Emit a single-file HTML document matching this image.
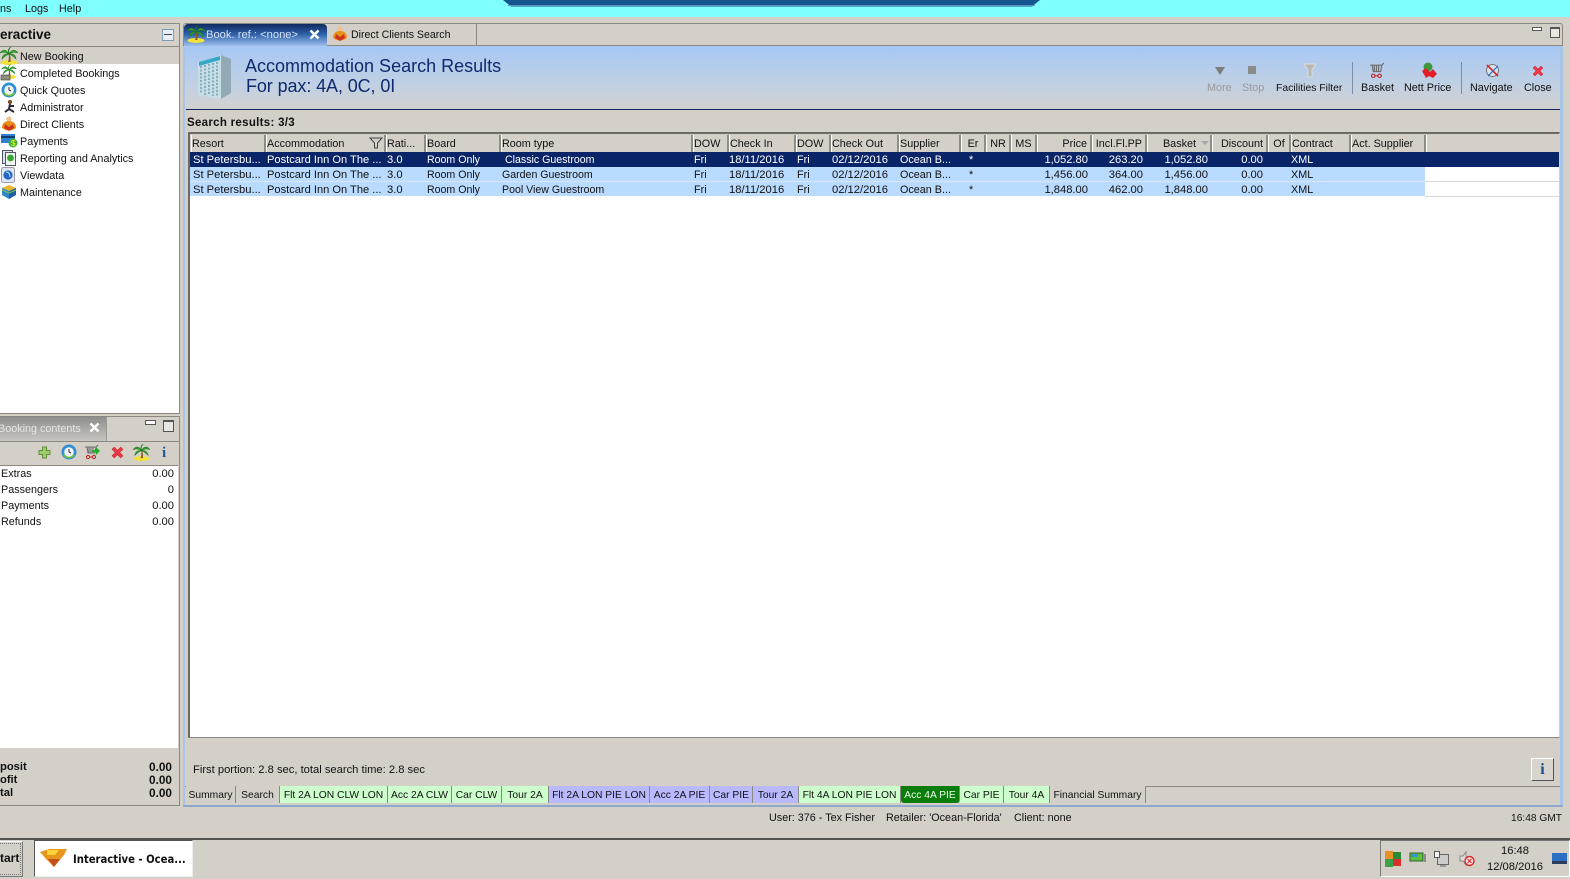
<!DOCTYPE html>
<html><head><meta charset="utf-8"><title>Interactive</title>
<style>
html,body{margin:0;padding:0;width:1570px;height:879px;overflow:hidden;background:#d4d0c8}
body{position:relative;font:10.8px/13px "Liberation Sans",Arial,sans-serif;color:#111}
.a,.t,.r{position:absolute}
.t{white-space:nowrap;height:13px;margin-top:1px}
.r{white-space:nowrap;height:13px;text-align:right;margin-top:1px;font-size:11.2px}
.b{font-weight:bold}
.h{position:absolute;top:135px;height:17px;margin-left:1px;background:#d4d0c8;border-right:2px solid #8f8c84;border-left:1px solid #fff;box-sizing:border-box;padding:2px 0 0 0;white-space:nowrap;line-height:14px;overflow:hidden}
.h.n{text-align:right;padding:2px 3px 0 0}
.rw{position:absolute;left:190px;height:15px;background:#b9dbff}
.sel{color:#fff}
.d{font-size:11.2px}
.p{font-size:11.1px}
.m{font-size:10.6px}
.st{position:absolute;top:786px;height:17px;line-height:19px;border-right:1px solid #8a8880;box-sizing:border-box;text-align:center;white-space:nowrap;background:#d4d0c8;font-size:10.3px}
svg{position:absolute;overflow:visible}
.g{color:#9a9a9a}
</style></head><body>
<svg width="0" height="0" style="position:absolute"><defs>
<symbol id="palm" viewBox="0 0 18 18"><ellipse cx="9" cy="15.5" rx="8.500" ry="2.500" fill="#f3e23a"/><path d="M8.500 7Q9.500 11 8 15h2.500Q11 11 9.800 7z" fill="#8a5a20"/><path d="M9 7Q5 0 0 6 5 4 9 7Q3 6 2 12 6 8 9 7Q13 0 18 6 13 4 9 7Q15 6 16 12 12 8 9 7Q7 2 11 0 8 2 9 7z" fill="#3aa52f" stroke="#1c7a1c" stroke-width=".6"/></symbol>
<symbol id="clock" viewBox="0 0 16 16"><circle cx="8" cy="8" r="7.500" fill="#2f8fd6"/><path d="M2 11a7 7 0 0 0 12 0l-3-1a4 4 0 0 1-6 0z" fill="#6fbf3f"/><circle cx="8" cy="8" r="4.800" fill="#eef4fa"/><path d="M8 5v3l2 1" fill="none" stroke="#333"/></symbol>
<symbol id="man" viewBox="0 0 16 16"><circle cx="8" cy="3" r="2.600" fill="#f2c088"/><path d="M1 12q0-7 7-7t7 7q-7 5-14 0z" fill="#e8911a"/><path d="M4 8l4 3 4-3 1 4-5 3-5-3z" fill="#d0301e"/></symbol>
<symbol id="cart" viewBox="0 0 16 16"><path d="M1 3h11l2-2M3 3l1 6h7l1-6M5 3v6M7 3v6M9 3v6" fill="none" stroke="#6d6d6d" stroke-width="1.100"/><circle cx="4" cy="13" r="1.600" fill="none" stroke="#c02020"/><circle cx="10" cy="13" r="1.600" fill="none" stroke="#c02020"/><path d="M5.600 13h2.800" stroke="#c02020"/></symbol>
<symbol id="xx" viewBox="0 0 12 12"><path d="M1 3l2-2 3 3 3-3 2 2-3 3 3 3-2 2-3-3-3 3-2-2 3-3z" fill="#ea3a45" stroke="#c8202c" stroke-width=".5"/></symbol>
</defs></svg>

<!-- top bar -->
<div class="a" style="left:0;top:0;width:1570px;height:17px;background:#80ffff"></div>
<svg style="left:0;top:0" width="1570" height="18"><polygon points="503,0 1040,0 1032,6.500 511,6.500" fill="#14578f"/><path d="M508 5.500H1035" stroke="#5d94c4"/></svg>
<div class="t" style="left:0;top:2px">ns</div>
<div class="t" style="left:25px;top:2px">Logs</div>
<div class="t" style="left:59px;top:2px">Help</div>

<!-- left top panel -->
<div class="a" style="left:-2px;top:23px;width:182px;height:391px;border:1px solid #8a8880;background:#d4d0c8;box-sizing:border-box"></div>
<div class="a" style="left:0;top:46px;width:179px;height:1px;background:#8a8880"></div>
<div class="a" style="left:0;top:47px;width:179px;height:366px;background:#fff"></div>
<div class="a" style="left:0;top:47px;width:179px;height:17px;background:#d4d0c8"></div>
<div class="t b" style="left:0;top:27px;font-size:13.500px;line-height:14px">eractive</div>
<div class="a" style="left:162px;top:29px;width:10px;height:10px;border:1px solid #7f9db9;background:#e8eef6"></div>
<div class="a" style="left:164px;top:34px;width:8px;height:1px;background:#445"></div>
<div class="t" style="left:20px;top:50px">New Booking</div>
<div class="t" style="left:20px;top:67px">Completed Bookings</div>
<div class="t" style="left:20px;top:84px">Quick Quotes</div>
<div class="t" style="left:20px;top:101px">Administrator</div>
<div class="t" style="left:20px;top:118px">Direct Clients</div>
<div class="t" style="left:20px;top:135px">Payments</div>
<div class="t" style="left:20px;top:152px">Reporting and Analytics</div>
<div class="t" style="left:20px;top:169px">Viewdata</div>
<div class="t" style="left:20px;top:186px">Maintenance</div>
<svg style="left:0;top:47px" width="18" height="18"><use href="#palm" width="18" height="18"/></svg>
<svg style="left:0;top:64px" width="18" height="18"><use href="#palm" width="18" height="15"/><rect x="1" y="11" width="9" height="5" fill="#8f8f80" stroke="#333" stroke-width=".6"/></svg>
<svg style="left:1px;top:82px" width="16" height="16"><use href="#clock" width="16" height="16"/></svg>
<svg style="left:3px;top:99px" width="14" height="16"><circle cx="7" cy="3" r="2" fill="#7a4a1e"/><path d="M7 5L6 10 2 13M6 10l5 3M6 7l5 0" stroke="#2a2a3a" stroke-width="2" fill="none"/></svg>
<svg style="left:1px;top:116px" width="16" height="16"><use href="#man" width="16" height="16"/></svg>
<svg style="left:1px;top:133px" width="16" height="16"><rect x="0" y="1" width="14" height="9" fill="#2f7fd0"/><rect x="0" y="3" width="14" height="2" fill="#123c70"/><circle cx="12" cy="10" r="4.500" fill="#3fae3f"/><text x="10" y="13" font-size="8" fill="#ff0" font-family="Liberation Sans">$</text></svg>
<svg style="left:2px;top:150px" width="15" height="16"><rect x=".5" y=".5" width="10" height="13" fill="#d8e4ea" stroke="#556"/><rect x="3.500" y="2.500" width="10" height="13" fill="#f2f6f2" stroke="#556"/><circle cx="8.500" cy="8" r="3.400" fill="#35a535"/></svg>
<svg style="left:1px;top:167px" width="15" height="16"><rect x=".5" y=".5" width="13" height="15" rx="2" fill="#dfe6f4" stroke="#99a"/><circle cx="7" cy="8" r="4.600" fill="#2a62c8"/><path d="M5 5q4 0 4 5" stroke="#9fd" fill="none"/></svg>
<svg style="left:1px;top:184px" width="16" height="16"><path d="M1 4l7-3 7 3-7 3z" fill="#e9b52a"/><path d="M1 4l7 3v8L1 11z" fill="#2c86c8"/><path d="M15 4L8 7v8l7-4z" fill="#1c5f9e"/><path d="M1 6l7 3 7-3" stroke="#7fc43f" fill="none"/></svg>

<!-- left lower panel -->
<div class="a" style="left:-2px;top:416px;width:182px;height:390px;border:1px solid #8a8880;box-sizing:border-box;background:#d4d0c8"></div>
<div class="a" style="left:0;top:417px;width:106px;height:24px;background:linear-gradient(#8e8e8e,#c8c6c0);border-right:1px solid #999"></div>
<div class="a" style="left:0;top:441px;width:179px;height:1px;background:#8a8880"></div>
<div class="t" style="left:-2px;top:422px;color:#e6e6e6">Booking contents</div>
<svg style="left:89px;top:422px" width="11" height="11"><path d="M1.500 1.500l8 8M9.500 1.500l-8 8" stroke="#fff" stroke-width="2.600"/></svg>
<div class="a" style="left:145px;top:420px;width:9px;height:3px;border:1px solid #555;background:#fff"></div>
<div class="a" style="left:163px;top:420px;width:9px;height:9px;border:1px solid #555;border-top-width:2px;background:#e8e6e0"></div>
<div class="a" style="left:0;top:465px;width:178px;height:1px;background:#8a8880"></div>
<svg style="left:38px;top:446px" width="13" height="13"><path d="M4.500 1h4v3.500h3.500v4H8.500v3.500h-4V8.500H1v-4h3.500z" fill="#a0cc68" stroke="#5f8f40"/></svg>
<svg style="left:61px;top:444px" width="16" height="16"><use href="#clock" width="16" height="16"/></svg>
<svg style="left:84px;top:444px" width="17" height="16"><use href="#cart" width="16" height="16"/><path d="M8 6h4V3l4 4-4 4V8H8z" fill="#1fae2e"/></svg>
<svg style="left:111px;top:446px" width="13" height="13"><use href="#xx" width="13" height="13"/></svg>
<svg style="left:133px;top:444px" width="17" height="17"><use href="#palm" width="17" height="17"/></svg>
<div class="t b" style="left:162px;top:445px;font:bold 15px/15px 'Liberation Serif',serif;color:#1c5a9a">i</div>
<div class="a" style="left:0;top:466px;width:178px;height:282px;background:#fff"></div>
<div class="t" style="left:1px;top:467px">Extras</div><div class="r" style="right:1396px;top:467px">0.00</div>
<div class="t" style="left:1px;top:483px">Passengers</div><div class="r" style="right:1396px;top:483px">0</div>
<div class="t" style="left:1px;top:499px">Payments</div><div class="r" style="right:1396px;top:499px">0.00</div>
<div class="t" style="left:1px;top:515px">Refunds</div><div class="r" style="right:1396px;top:515px">0.00</div>
<div class="t b" style="left:0;top:760px;font-size:11.200px">posit</div><div class="r b" style="right:1398px;top:760px;font-size:11.800px">0.00</div>
<div class="t b" style="left:0;top:773px;font-size:11.200px">ofit</div><div class="r b" style="right:1398px;top:773px;font-size:11.800px">0.00</div>
<div class="t b" style="left:0;top:786px;font-size:11.200px">tal</div><div class="r b" style="right:1398px;top:786px;font-size:11.800px">0.00</div>

<!-- main panel -->
<div class="a" style="left:183px;top:23px;width:1380px;height:783px;border:1px solid #8a8880;border-radius:3px 3px 0 0;box-sizing:border-box;background:#d4d0c8"></div>
<div class="a" style="left:183px;top:46px;width:2px;height:760px;background:#a8c4e6"></div>
<div class="a" style="left:1560px;top:46px;width:3px;height:760px;background:#a8c4e6"></div>
<div class="a" style="left:183px;top:805px;width:1380px;height:2px;background:#8ea8cc"></div>
<div class="a" style="left:184px;top:45px;width:1379px;height:1px;background:#8a8880"></div>
<div class="a" style="left:185px;top:46px;width:1375px;height:63px;background:linear-gradient(#a6c8f5,#c0d0e4 60%,#d2d2cf)"></div>
<div class="a" style="left:186px;top:109px;width:1374px;height:1px;background:#12235f"></div>
<div class="a" style="left:184px;top:24px;width:143px;height:22px;background:linear-gradient(#10295f,#2c5fa8 45%,#9dbfec);border-radius:4px 4px 0 0"></div>
<svg style="left:187px;top:25px" width="18" height="18"><use href="#palm" width="18" height="18"/></svg>
<div class="t d" style="left:206px;top:28px;color:#d6e2f2">Book. ref.: &lt;none&gt;</div>
<svg style="left:309px;top:29px" width="11" height="11"><path d="M1.500 1.500l8 8M9.500 1.500l-8 8" stroke="#fff" stroke-width="2.600"/></svg>
<svg style="left:332px;top:26px" width="16" height="16"><use href="#man" width="16" height="16"/></svg>
<div class="t m" style="left:351px;top:28px">Direct Clients Search</div>
<div class="a" style="left:476px;top:24px;width:1px;height:21px;background:#8a8880"></div>
<div class="a" style="left:1532px;top:27px;width:8px;height:2px;border:1px solid #555;background:#fff"></div>
<div class="a" style="left:1550px;top:27px;width:8px;height:8px;border:1px solid #555;border-top-width:2px;background:#e8e6e0"></div>

<svg style="left:197px;top:53px" width="38" height="48"><path d="M1 10L24 2v44L1 42z" fill="#c9dde4"/><path d="M24 2l10 4v34l-10 6z" fill="#93aab6"/><path d="M2 9l21-6v4L2 13z" fill="#35a8c8"/><g stroke="#6fa4ba" stroke-width="1.600" stroke-dasharray="2 1.500"><path d="M4 13v28M8 12v30M12 11v31M16 10v33M20 9v34"/></g></svg>
<div class="t" style="left:245px;top:55px;height:20px;font-size:18px;line-height:20px;color:#0f2a6e">Accommodation Search Results</div>
<div class="t" style="left:246px;top:75px;height:20px;font-size:18px;line-height:20px;letter-spacing:-.1px;color:#0f2a6e">For pax: 4A, 0C, 0I</div>

<svg style="left:1214px;top:65px" width="12" height="11"><path d="M1 2h10L6 10z" fill="#7d7d7d"/></svg>
<div class="a" style="left:1248px;top:66px;width:8px;height:8px;background:#8b8b8b"></div>
<svg style="left:1304px;top:63px" width="12" height="15"><path d="M0 1h12L8 7v7H4V7z" fill="#b8b8b4" stroke="#ddd"/></svg>
<svg style="left:1369px;top:62px" width="17" height="17"><use href="#cart" width="17" height="17"/></svg>
<svg style="left:1420px;top:62px" width="18" height="17"><circle cx="8" cy="5" r="4.500" fill="#3f9a3f"/><path d="M2 9l4-3 4 4 3-3 4 5-4 4-4-2-3 2z" fill="#e21e2a"/></svg>
<svg style="left:1484px;top:62px" width="17" height="17"><circle cx="8.500" cy="8.500" r="6" fill="#d6e6ee" stroke="#777"/><path d="M3 3l11 11" stroke="#d22" stroke-width="1.600"/><path d="M14 4L4 14" stroke="#36c" stroke-width="1.200"/></svg>
<svg style="left:1532px;top:65px" width="12" height="12"><use href="#xx" width="12" height="12"/></svg>
<div class="a" style="left:1352px;top:62px;width:1px;height:32px;background:#7d8ea8"></div>
<div class="a" style="left:1461px;top:62px;width:1px;height:32px;background:#7d8ea8"></div>
<div class="t g" style="left:1207px;top:81px">More</div>
<div class="t g" style="left:1242px;top:81px">Stop</div>
<div class="t" style="left:1276px;top:81px;font-size:10.400px">Facilities Filter</div>
<div class="t" style="left:1361px;top:81px">Basket</div>
<div class="t" style="left:1404px;top:81px">Nett Price</div>
<div class="t" style="left:1470px;top:81px">Navigate</div>
<div class="t" style="left:1524px;top:81px">Close</div>
<div class="t b" style="left:187px;top:116px;font-size:11.500px;letter-spacing:.3px">Search results: 3/3</div>

<!-- table -->
<div class="a" style="left:188px;top:132px;width:1372px;height:606px;background:#fff;border:1px solid #8a8880;border-width:2px 1px 1px 2px;border-color:#6d6a64 #d4d0c8 #8a8880 #6d6a64;box-sizing:border-box"></div>
<div class="a" style="left:190px;top:134px;width:1369px;height:18px;background:#d4d0c8"></div>
<div class="h" style="left:190px;width:75px">Resort</div>
<div class="h" style="left:265px;width:120px">Accommodation</div>
<div class="h" style="left:385px;width:40px">Rati...</div>
<div class="h" style="left:425px;width:75px">Board</div>
<div class="h" style="left:500px;width:192px">Room type</div>
<div class="h" style="left:692px;width:36px">DOW</div>
<div class="h" style="left:728px;width:67px">Check In</div>
<div class="h" style="left:795px;width:35px">DOW</div>
<div class="h" style="left:830px;width:68px">Check Out</div>
<div class="h" style="left:898px;width:62px">Supplier</div>
<div class="h" style="left:960px;width:25px;text-align:center">Er</div>
<div class="h" style="left:985px;width:25px;text-align:center">NR</div>
<div class="h" style="left:1010px;width:26px;text-align:center">MS</div>
<div class="h n" style="left:1036px;width:55px">Price</div>
<div class="h n" style="left:1091px;width:55px">Incl.Fl.PP</div>
<div class="h n" style="left:1146px;width:65px;padding-right:14px">Basket</div>
<div class="h n" style="left:1211px;width:56px">Discount</div>
<div class="h" style="left:1267px;width:23px;text-align:center">Of</div>
<div class="h" style="left:1290px;width:60px">Contract</div>
<div class="h" style="left:1350px;width:75px">Act. Supplier</div>
<div class="h" style="left:1425px;width:133px;border-right:0"></div>
<svg style="left:369px;top:137px" width="14" height="12"><path d="M1 1h12L8.500 6v5h-3V6z" fill="none" stroke="#444"/></svg>
<svg style="left:1201px;top:141px" width="8" height="5"><path d="M0 0h8L4 4z" fill="#a8a8a8"/></svg>

<div class="rw" style="top:152px;width:1369px;background:#0a2468"></div>
<div class="rw" style="top:167px;width:1235px;border-bottom:1px solid #d8e6f6;box-sizing:border-box"></div>
<div class="rw" style="top:182px;width:1235px;height:14px"></div>
<div class="a" style="left:1425px;top:181px;width:134px;height:1px;background:#d8d8d8"></div>
<div class="a" style="left:1425px;top:196px;width:134px;height:1px;background:#d8d8d8"></div>

<!-- row 1 -->
<div class="sel">
<div class="t d" style="left:193px;top:153px">St Petersbu...</div><div class="t p" style="left:267px;top:153px">Postcard Inn On The ...</div><div class="t d" style="left:387px;top:153px">3.0</div><div class="t m" style="left:427px;top:153px">Room Only</div><div class="t m" style="left:505px;top:153px">Classic Guestroom</div><div class="t" style="left:694px;top:153px">Fri</div><div class="t d" style="left:729px;top:153px">18/11/2016</div><div class="t" style="left:797px;top:153px">Fri</div><div class="t d" style="left:832px;top:153px">02/12/2016</div><div class="t" style="left:900px;top:153px">Ocean B...</div><div class="t" style="left:969px;top:153px">*</div>
<div class="r" style="right:482px;top:153px">1,052.80</div><div class="r" style="right:427px;top:153px">263.20</div><div class="r" style="right:362px;top:153px">1,052.80</div><div class="r" style="right:307px;top:153px">0.00</div><div class="t" style="left:1291px;top:153px">XML</div>
</div>
<!-- row 2 -->
<div class="t d" style="left:193px;top:168px">St Petersbu...</div><div class="t p" style="left:267px;top:168px">Postcard Inn On The ...</div><div class="t d" style="left:387px;top:168px">3.0</div><div class="t m" style="left:427px;top:168px">Room Only</div><div class="t m" style="left:502px;top:168px">Garden Guestroom</div><div class="t" style="left:694px;top:168px">Fri</div><div class="t d" style="left:729px;top:168px">18/11/2016</div><div class="t" style="left:797px;top:168px">Fri</div><div class="t d" style="left:832px;top:168px">02/12/2016</div><div class="t" style="left:900px;top:168px">Ocean B...</div><div class="t" style="left:969px;top:168px">*</div>
<div class="r" style="right:482px;top:168px">1,456.00</div><div class="r" style="right:427px;top:168px">364.00</div><div class="r" style="right:362px;top:168px">1,456.00</div><div class="r" style="right:307px;top:168px">0.00</div><div class="t" style="left:1291px;top:168px">XML</div>
<!-- row 3 -->
<div class="t d" style="left:193px;top:183px">St Petersbu...</div><div class="t p" style="left:267px;top:183px">Postcard Inn On The ...</div><div class="t d" style="left:387px;top:183px">3.0</div><div class="t m" style="left:427px;top:183px">Room Only</div><div class="t m" style="left:502px;top:183px">Pool View Guestroom</div><div class="t" style="left:694px;top:183px">Fri</div><div class="t d" style="left:729px;top:183px">18/11/2016</div><div class="t" style="left:797px;top:183px">Fri</div><div class="t d" style="left:832px;top:183px">02/12/2016</div><div class="t" style="left:900px;top:183px">Ocean B...</div><div class="t" style="left:969px;top:183px">*</div>
<div class="r" style="right:482px;top:183px">1,848.00</div><div class="r" style="right:427px;top:183px">462.00</div><div class="r" style="right:362px;top:183px">1,848.00</div><div class="r" style="right:307px;top:183px">0.00</div><div class="t" style="left:1291px;top:183px">XML</div>

<!-- status -->
<div class="t d" style="left:193px;top:763px">First portion: 2.8 sec, total search time: 2.8 sec</div>
<div class="a" style="left:1531px;top:758px;width:21px;height:21px;background:#d8d5ce;border:1px solid;border-color:#fff #555 #555 #fff;text-align:center;font:bold 16px/21px 'Liberation Serif',serif;color:#1c4a8a">i</div>
<div class="a" style="left:185px;top:786px;width:1375px;height:1px;background:#8a8880"></div>
<div class="st" style="left:186px;width:50px">Summary</div>
<div class="st" style="left:236px;width:44px">Search</div>
<div class="st" style="left:280px;width:108px;background:#ccffcc">Flt 2A LON CLW LON</div>
<div class="st" style="left:388px;width:64px;background:#ccffcc">Acc 2A CLW</div>
<div class="st" style="left:452px;width:50px;background:#ccffcc">Car CLW</div>
<div class="st" style="left:502px;width:47px;background:#ccffcc">Tour 2A</div>
<div class="st" style="left:549px;width:101px;background:#b9b9ff">Flt 2A LON PIE LON</div>
<div class="st" style="left:650px;width:60px;background:#b9b9ff">Acc 2A PIE</div>
<div class="st" style="left:710px;width:43px;background:#b9b9ff">Car PIE</div>
<div class="st" style="left:753px;width:46px;background:#b9b9ff">Tour 2A</div>
<div class="st" style="left:799px;width:102px;background:#ccffcc">Flt 4A LON PIE LON</div>
<div class="st" style="left:901px;width:59px;background:#0a7d0a;color:#e8ffe8;border-radius:0 0 3px 3px">Acc 4A PIE</div>
<div class="st" style="left:960px;width:44px;background:#ccffcc">Car PIE</div>
<div class="st" style="left:1004px;width:46px;background:#ccffcc">Tour 4A</div>
<div class="st" style="left:1050px;width:96px">Financial Summary</div>

<div class="t" style="left:769px;top:811px">User: 376 - Tex Fisher</div>
<div class="t" style="left:886px;top:811px">Retailer: 'Ocean-Florida'</div>
<div class="t" style="left:1014px;top:811px">Client: none</div>
<div class="r" style="right:8px;top:811px;font-size:10.200px">16:48 GMT</div>

<!-- taskbar -->
<div class="a" style="left:0;top:838px;width:1570px;height:2px;background:#55534e"></div>
<div class="a" style="left:0;top:840px;width:1570px;height:39px;background:#d4d0c8"></div>
<div class="a" style="left:-3px;top:841px;width:26px;height:36px;border:1px solid;border-color:#fff #777 #777 #fff;box-sizing:border-box;outline:1px dotted #777;outline-offset:-3px"></div>
<div class="t b" style="left:0;top:851px;font-size:12px">tart</div>
<div class="a" style="left:34px;top:840px;width:159px;height:37px;background:#fff;border:1px solid;border-color:#555 #eee #eee #555;box-sizing:border-box"></div>
<svg style="left:39px;top:848px" width="30" height="20"><path d="M1 4L10 1h18l-3 6-10 12L7 11z" fill="#e8961c"/><path d="M8 2h12l-4 5H8z" fill="#ffd23a"/><path d="M9 11h12l-6 8z" fill="#c2501a"/></svg>
<div class="t b" style="left:73px;top:852px;font-size:11.200px;font-family:'DejaVu Sans Condensed','Liberation Sans',sans-serif">Interactive - Ocea...</div>
<div class="a" style="left:1380px;top:840px;width:190px;height:37px;border:1px solid;border-color:#777 #fff #fff #777;box-sizing:border-box"></div>
<svg style="left:1385px;top:851px" width="17" height="16"><rect width="8" height="8" fill="#e8912a"/><rect x="8" y="1" width="8" height="7" fill="#2a8a3a"/><rect y="8" width="8" height="8" fill="#3aa04a"/><rect x="8" y="8" width="8" height="7" fill="#d8302a"/></svg>
<svg style="left:1410px;top:853px" width="16" height="11"><rect width="13" height="8" fill="#5fbf3f" stroke="#2f5f2f"/><rect x="1" y="1" width="7" height="3" fill="#39c"/><path d="M15 1v8" stroke="#445"/></svg>
<svg style="left:1434px;top:851px" width="16" height="16"><rect x="3.500" y="3.500" width="11" height="10" fill="#ccc" stroke="#666"/><rect x=".5" y=".5" width="5" height="6" fill="#f4f4f4" stroke="#555"/><path d="M6 15h6" stroke="#666"/></svg>
<svg style="left:1459px;top:851px" width="16" height="16"><path d="M1 5h3l3-4v13l-3-4H1z" fill="#ddd" stroke="#888"/><circle cx="10.500" cy="10" r="4.500" fill="#f8e0e0" stroke="#d22" stroke-width="1.400"/><path d="M8.500 8l4 4M12.500 8l-4 4" stroke="#d22"/></svg>
<div class="t d" style="left:1501px;top:844px">16:48</div>
<div class="t d" style="left:1487px;top:860px">12/08/2016</div>
<svg style="left:1552px;top:853px" width="17" height="13"><rect width="15" height="11" fill="#2a6fc4"/><rect y="8" width="15" height="3" fill="#2b3c5c"/></svg>
</body></html>
